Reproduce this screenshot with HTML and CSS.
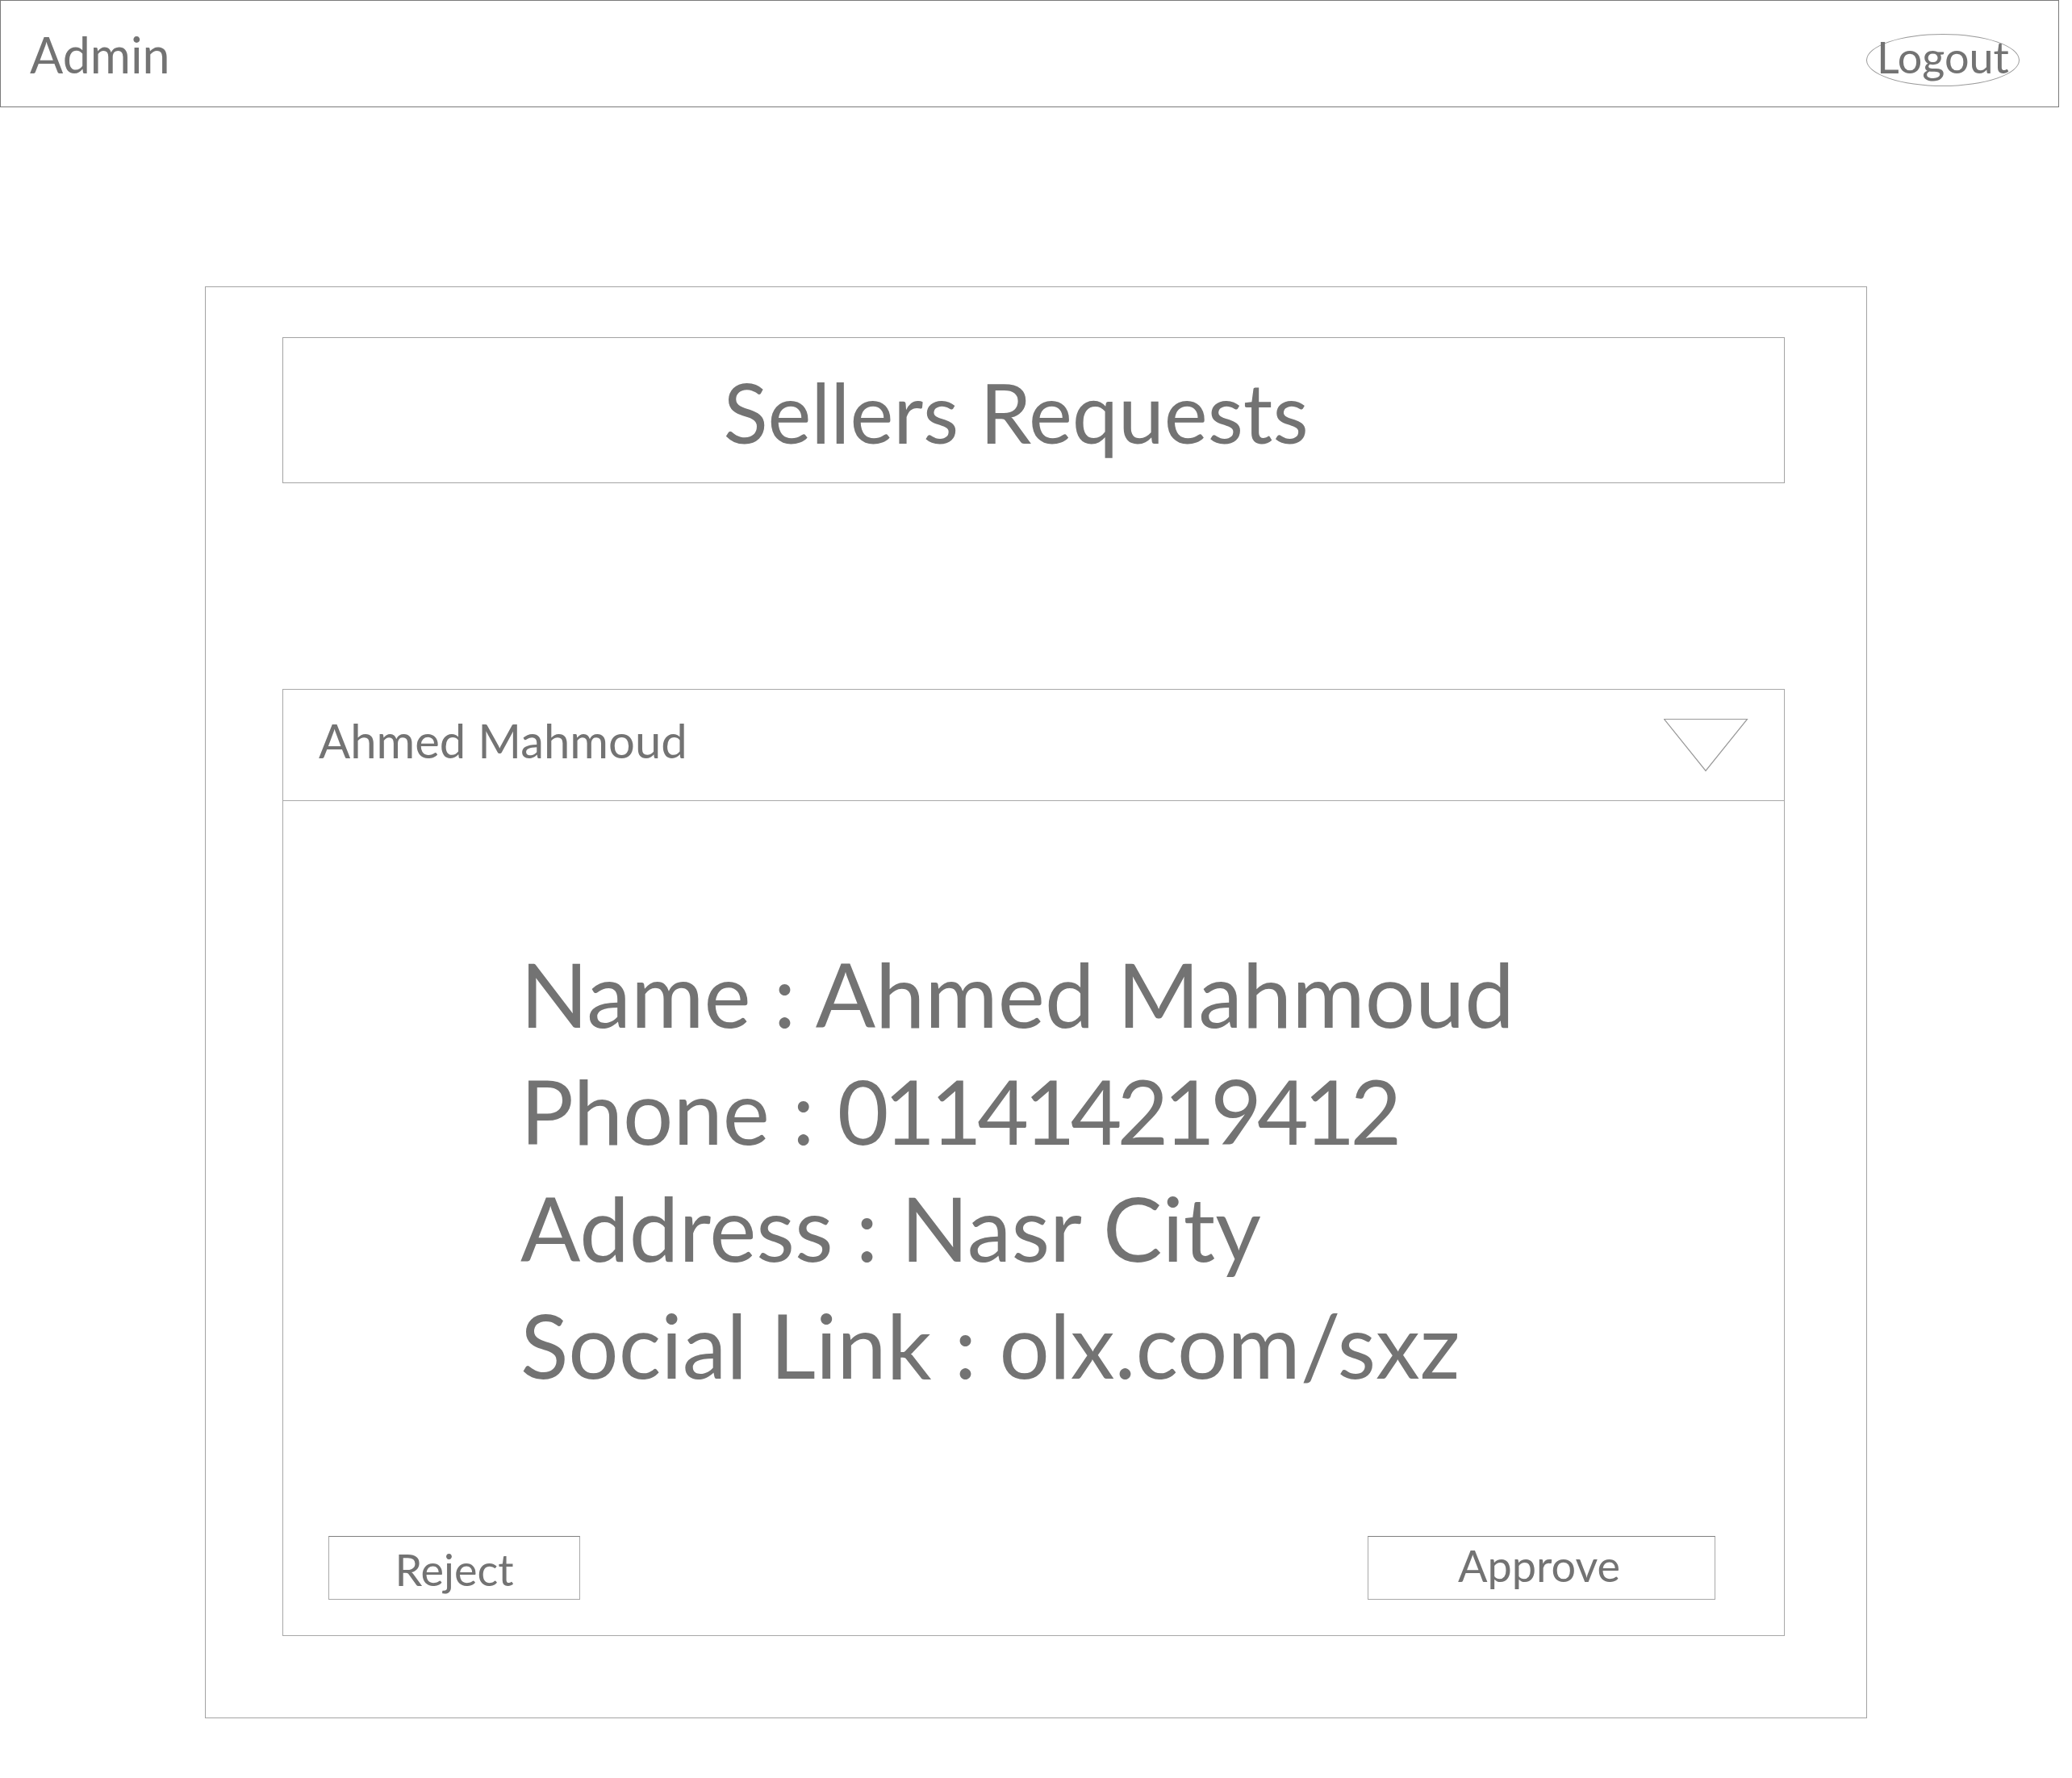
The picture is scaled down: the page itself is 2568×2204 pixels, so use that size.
FILE: index.html
```html
<!DOCTYPE html>
<html lang="en">
<head>
<meta charset="utf-8">
<title>Admin - Sellers Requests</title>
<link rel="stylesheet" href="styles.css">
</head>
<body>
<header class="topbar">
  <span class="brand">Admin</span>
  <span class="logout">Logout</span>
</header>
<main class="panel">
  <div class="title-box">Sellers Requests</div>
  <section class="card">
    <div class="card-head">
      <span class="card-name">Ahmed Mahmoud</span>
      <svg class="caret" width="105" height="66" viewBox="0 0 105 66">
        <polygon points="0.5,0.5 103.5,0.5 52,64.5" fill="none" stroke="#9a9a9a" stroke-width="1.2"/>
      </svg>
    </div>
    <div class="card-body">
      <div class="details">
        <div>Name : Ahmed Mahmoud</div>
        <div>Phone : <span class="num">01141421941</span>2</div>
        <div>Address : Nasr City</div>
        <div>Social Link : olx.com/sxz</div>
      </div>
      <div class="actions">
        <span class="btn btn-reject">Reject</span>
        <span class="btn btn-approve">Approve</span>
      </div>
    </div>
  </section>
</main>
</body>
</html>
```
FILE: styles.css
```css
* { box-sizing: border-box; }
html, body { margin: 0; padding: 0; background: #ffffff; }
body {
  font-family: Lato, "Open Sans", "Liberation Sans", sans-serif;
  color: #737373;
  width: 2568px;
  height: 2204px;
}

.topbar {
  display: flex;
  justify-content: space-between;
  align-items: flex-start;
  width: 2552px;
  height: 133px;
  border: 1px solid #7a7a7a;
  padding: 0 48px 0 36px;
}
.brand {
  display: block;
  font-size: 61px;
  line-height: 72px;
  margin-top: 31px;
}
.logout {
  display: block;
  width: 190px;
  height: 65px;
  margin-top: 41px;
  border: 1px solid #9a9a9a;
  border-radius: 50%;
  text-align: center;
  font-size: 54px;
  line-height: 56px;
}

.panel {
  width: 2060px;
  height: 1775px;
  margin: 222px 0 0 254px;
  border: 1px solid #a3a3a3;
  padding: 62px 0 0 95px;
}
.title-box {
  width: 1862px;
  height: 181px;
  border: 1px solid #a3a3a3;
  padding: 4px 44px 0 0;
  text-align: center;
  font-size: 102px;
  line-height: 175px;
}

.card {
  display: flex;
  flex-direction: column;
  width: 1862px;
  height: 1174px;
  margin-top: 255px;
  border: 1px solid #a8a8a8;
}
.card-head {
  display: flex;
  justify-content: space-between;
  align-items: flex-start;
  height: 138px;
  border-bottom: 1px solid #a8a8a8;
  padding: 29px 44px 0 44px;
}
.card-name {
  display: block;
  font-size: 58px;
  line-height: 68px;
}
.caret {
  display: block;
  margin-top: 7px;
}

.card-body {
  flex: 1;
  display: flex;
  flex-direction: column;
  padding-top: 166px;
}
.details {
  padding-left: 294px;
  font-size: 110px;
  line-height: 145px;
}
.num {
  letter-spacing: -6px;
}
.actions {
  margin-top: auto;
  display: flex;
  justify-content: space-between;
  padding: 0 85px 44px 56px;
}
.btn {
  display: block;
  height: 79px;
  border: 1px solid #a8a8a8;
  border-top-color: #7f7f7f;
  text-align: center;
  font-size: 54px;
  line-height: 72px;
}
.btn-reject {
  width: 312px;
  padding-top: 5px;
}
.btn-approve {
  width: 431px;
  padding-right: 6px;
}
```
